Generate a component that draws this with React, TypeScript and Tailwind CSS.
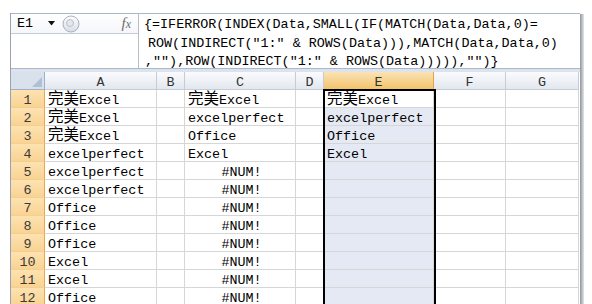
import React from 'react';

const mono = { fontFamily: '"Liberation Mono", "Noto Sans CJK SC", monospace' };

const colA = ['完美Excel', '完美Excel', '完美Excel', 'excelperfect', 'excelperfect', 'excelperfect', 'Office', 'Office', 'Office', 'Excel', 'Excel', 'Office'];
const colC = ['完美Excel', 'excelperfect', 'Office', 'Excel', '#NUM!', '#NUM!', '#NUM!', '#NUM!', '#NUM!', '#NUM!', '#NUM!', '#NUM!'];
const colE = ['完美Excel', 'excelperfect', 'Office', 'Excel', '', '', '', '', '', '', '', ''];

// CJK glyphs are double width in the sheet font
const Txt = ({ s }: { s: string }) => {
    if (s.startsWith('完美')) {
        return (
            <>
                <span className="text-[15.5px] leading-none">完美</span>
                {s.slice(2)}
            </>
        );
    }
    return <>{s}</>;
};

const Cell = ({ s, className = '' }: { s: string; className?: string }) => (
    <div className={`h-[18px] border-r border-b border-[#d6d6d6] pl-[3px] pt-[3px] leading-[16px] whitespace-nowrap overflow-hidden text-black ${className}`}>
        {s === '#NUM!' ? <div className="text-center">{s}</div> : <Txt s={s} />}
    </div>
);

const Head = ({ l, on = false }: { l: string; on?: boolean }) => (
    <div className={`h-[18px] border-r border-b text-center pt-[3px] leading-[15px] text-[#333] ${on ? 'bg-gradient-to-b from-[#fbe3b4] to-[#f2c46a] border-[#e0a34a]' : 'bg-gradient-to-b from-[#fafbfd] to-[#e3e8ef] border-[#c5ccd8]'}`}>
        {l}
    </div>
);

const App = () => {
    return (
        <div className="w-[592px] h-[304px] overflow-hidden bg-white text-[13.4px] pt-[13px] pl-[10px]" style={mono}>
            <div className="flex w-[574px]">
                <div className="w-[570px] border-l border-[#9aa3ad]">
                    {/* formula bar */}
                    <div className="flex h-[56px] border-t border-b border-[#a9b8cc] bg-white">
                        <div className="w-[128px] flex flex-col border-r border-[#b4bfcd]">
                            <div className="h-[20px] flex items-center border-b border-[#c3ccd8] bg-gradient-to-b from-white to-[#f4f6fa]">
                                <span className="pl-[6px] w-[36px] pt-[1px]">E1</span>
                                <svg width="7" height="5" viewBox="0 0 7 5" className="ml-[1px]">
                                    <path d="M0 0 H7 L3.5 4.5 Z" fill="#111" />
                                </svg>
                                <svg width="18" height="18" viewBox="0 0 18 18" className="ml-[7px]">
                                    <defs>
                                        <linearGradient id="kn" x1="0" y1="0" x2="0" y2="1">
                                            <stop offset="0" stopColor="#ffffff" />
                                            <stop offset="1" stopColor="#d7dde6" />
                                        </linearGradient>
                                    </defs>
                                    <circle cx="9" cy="9" r="8" fill="url(#kn)" stroke="#a9b2bf" />
                                    <circle cx="8" cy="8" r="3.5" fill="#e4e8ee" stroke="#b9c1cc" />
                                </svg>
                                <span className="ml-auto mr-[7px] italic text-[#6e6e6e] text-[15px] leading-none" style={{ fontFamily: '"Liberation Serif", serif' }}>
                                    f<span className="text-[12px]">x</span>
                                </span>
                            </div>
                            <div className="flex-1 bg-white" />
                        </div>
                        <div className="flex-1 pl-[5px] pt-[2px] leading-[18.5px] whitespace-pre text-black">
                            <div>{'{=IFERROR(INDEX(Data,SMALL(IF(MATCH(Data,Data,0)='}</div>
                            <div className="ml-[4px]">{'ROW(INDIRECT("1:" & ROWS(Data))),MATCH(Data,Data,0)'}</div>
                            <div className="ml-[1px]">{',""),ROW(INDIRECT("1:" & ROWS(Data))))),"")}'}</div>
                        </div>
                    </div>
                    <div className="h-[3px] bg-[#dde3ec]" />
                    {/* grid */}
                    <div className="relative">
                        <div className="grid grid-cols-[34px_112px_28px_111px_28px_110px_72px_73px]">
                            <div className="h-[18px] border-r border-b border-[#9fb1c8] bg-[#d9e1ec] relative">
                                <svg width="10" height="10" viewBox="0 0 10 10" className="absolute right-[2px] bottom-[2px]">
                                    <path d="M10 0 V10 H0 Z" fill="#aebfd6" />
                                </svg>
                            </div>
                            <Head l="A" />
                            <Head l="B" />
                            <Head l="C" />
                            <Head l="D" />
                            <Head l="E" on />
                            <Head l="F" />
                            <Head l="G" />
                            {colA.map((a, i) => (
                                <React.Fragment key={i}>
                                    <div className="h-[18px] border-r border-b border-r-[#eaa84c] border-b-[#f6cf8e] bg-gradient-to-b from-[#fde2b0] to-[#f9d394] text-center pt-[3px] leading-[16px] text-[#3a3a3a]">
                                        {i + 1}
                                    </div>
                                    <Cell s={a} />
                                    <Cell s="" />
                                    <Cell s={colC[i]} />
                                    <Cell s="" />
                                    <Cell s={colE[i]} className={i === 0 ? 'bg-white' : 'bg-[#e5e9f4] border-[#d0d5e3]'} />
                                    <Cell s="" />
                                    <Cell s="" />
                                </React.Fragment>
                            ))}
                        </div>
                        {/* selection border on column E */}
                        <div className="absolute left-[312px] top-[17px] w-[113px] h-[240px] border-2 border-black pointer-events-none" />
                    </div>
                </div>
                <div className="w-[4px] mt-[1px] bg-gradient-to-r from-[#8f959c] to-[#e4e6e8]" />
            </div>
        </div>
    );
};

export default App;
